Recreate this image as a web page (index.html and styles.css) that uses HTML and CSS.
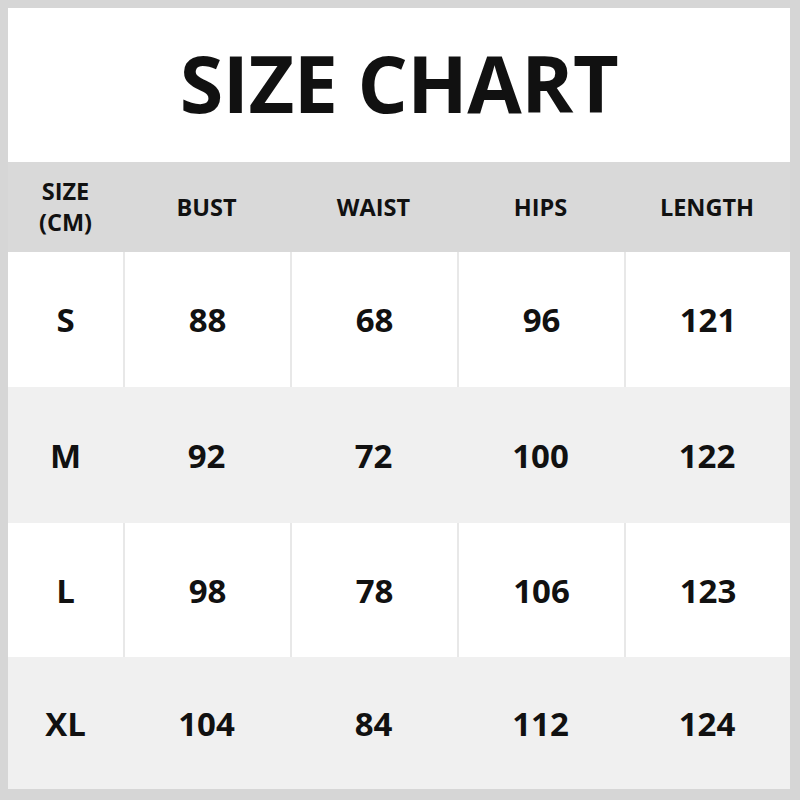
FILE: index.html
```html
<!DOCTYPE html>
<html>
<head>
<meta charset="utf-8">
<link rel="stylesheet" href="styles.css">
</head>
<body>
<div class="chart">
  <div class="title">SIZE CHART</div>
  <div class="row head">
    <div class="cell">SIZE<br>(CM)</div>
    <div class="cell">BUST</div>
    <div class="cell">WAIST</div>
    <div class="cell">HIPS</div>
    <div class="cell">LENGTH</div>
  </div>
  <div class="row white r1">
    <div class="cell">S</div><div class="cell">88</div><div class="cell">68</div><div class="cell">96</div><div class="cell">121</div>
  </div>
  <div class="row light r2">
    <div class="cell">M</div><div class="cell">92</div><div class="cell">72</div><div class="cell">100</div><div class="cell">122</div>
  </div>
  <div class="row white r3">
    <div class="cell">L</div><div class="cell">98</div><div class="cell">78</div><div class="cell">106</div><div class="cell">123</div>
  </div>
  <div class="row light r4">
    <div class="cell">XL</div><div class="cell">104</div><div class="cell">84</div><div class="cell">112</div><div class="cell">124</div>
  </div>
</div>
</body>
</html>
```
FILE: styles.css
```css
html, body {
  margin: 0;
  padding: 0;
}
body {
  background: #d6d6d6;
  width: 800px;
  height: 800px;
  padding: 8px 10px 11px 8px;
  box-sizing: border-box;
  font-family: "Open Sans", "Noto Sans", sans-serif;
  color: #111;
}
.chart {
  width: 782px;
  height: 781px;
  background: #fff;
  display: flex;
  flex-direction: column;
}
.title {
  height: 154px;
  display: flex;
  align-items: center;
  justify-content: center;
  font-size: 79px;
  font-weight: 700;
  letter-spacing: -0.5px;
  padding-bottom: 6px;
  box-sizing: border-box;
}
.row {
  display: grid;
  grid-template-columns: 115px 167px 167px 167px 166px;
  font-weight: 700;
}
.cell {
  display: flex;
  align-items: center;
  justify-content: center;
  text-align: center;
  box-sizing: border-box;
}
.head {
  height: 90px;
  background: #d9d9d9;
  font-size: 23.5px;
  line-height: 31px;
}
.white, .light {
  font-size: 33px;
}
.white { background: #fff; }
.light { background: #f0f0f0; }
.white .cell + .cell {
  border-left: 2px solid #e8e8e8;
}
.r1 { height: 135px; }
.r2 { height: 136px; }
.r3 { height: 134px; }
.r4 { height: 132px; }
```
